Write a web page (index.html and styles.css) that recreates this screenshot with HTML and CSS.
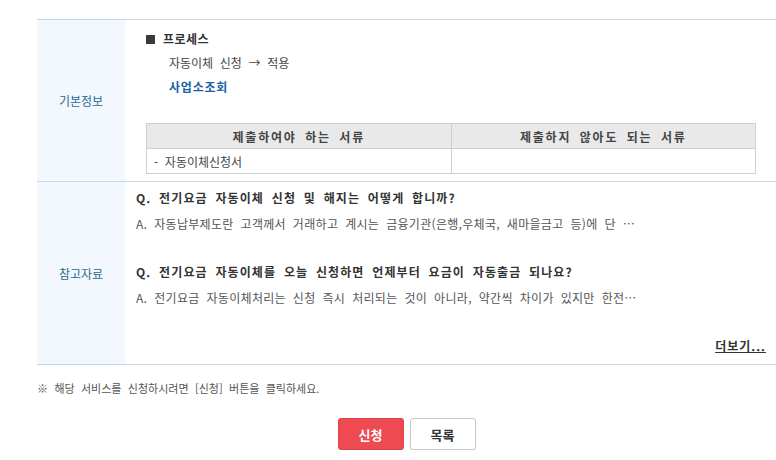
FILE: index.html
```html
<!DOCTYPE html>
<html lang="ko">
<head>
<meta charset="utf-8">
<link rel="stylesheet" href="styles.css">
</head>
<body>
<div class="wrap">
  <div class="info">
    <div class="row row-basic">
      <div class="label">기본정보</div>
      <div class="cell cell-basic">
        <p class="process-title"><span class="sq"></span>프로세스</p>
        <p class="process-step">자동이체 신청 → 적용</p>
        <p class="process-link"><a href="#">사업소조회</a></p>
        <table class="docs">
          <thead>
            <tr><th>제출하여야 하는 서류</th><th>제출하지 않아도 되는 서류</th></tr>
          </thead>
          <tbody>
            <tr><td>- 자동이체신청서</td><td></td></tr>
          </tbody>
        </table>
      </div>
    </div>
    <div class="row row-ref">
      <div class="label">참고자료</div>
      <div class="cell cell-ref">
        <div class="qa">
          <p class="q">Q. 전기요금 자동이체 신청 및 해지는 어떻게 합니까?</p>
          <p class="a">A. 자동납부제도란 고객께서 거래하고 계시는 금융기관(은행,우체국, 새마을금고 등)에 단 …</p>
        </div>
        <div class="qa">
          <p class="q">Q. 전기요금 자동이체를 오늘 신청하면 언제부터 요금이 자동출금 되나요?</p>
          <p class="a">A. 전기요금 자동이체처리는 신청 즉시 처리되는 것이 아니라, 약간씩 차이가 있지만 한전…</p>
        </div>
        <p class="more"><a href="#">더보기...</a></p>
      </div>
    </div>
  </div>
  <p class="notice">※ 해당 서비스를 신청하시려면 [신청] 버튼을 클릭하세요.</p>
  <div class="buttons">
    <button class="btn btn-apply" type="button">신청</button>
    <button class="btn btn-list" type="button">목록</button>
  </div>
</div>
</body>
</html>
```

FILE: styles.css
```css
* { box-sizing: border-box; }
html, body { margin: 0; padding: 0; background: #fff; }
body {
  font-family: "Noto Sans CJK KR", "Noto Sans", sans-serif;
  font-size: 12px;
  color: #444;
  word-spacing: 3.3px;
}
p { margin: 0; }
a { text-decoration: none; }

.wrap {
  margin-left: 37px;
  width: 739px;
  padding-top: 19px;
}

.info {
  border-top: 1px solid #c8d8e5;
  border-bottom: 1px solid #c8d8e5;
}
.row {
  display: flex;
}
.row + .row { border-top: 1px solid #c8d8e5; }
.label {
  width: 88px;
  flex: none;
  background: #f2f8fe;
  color: #2a6a90;
  font-size: 12px;
  display: flex;
  align-items: center;
  justify-content: center;
}
.cell { flex: 1; }

.cell-basic { padding: 7px 20px 7px 21px; }
.process-title, .process-step, .process-link { line-height: 24px; }
.process-title { font-weight: 700; color: #333; display: flex; align-items: center; letter-spacing: 0.5px; }
.sq { width: 9px; height: 9px; background: #3a3a3a; margin-right: 8px; display: inline-block; }
.process-step { padding-left: 23px; color: #444; }
.process-link { padding-left: 23px; }
.process-link a { color: #1b62a5; font-weight: 700; letter-spacing: 0.8px; }

.docs {
  margin-top: 24px;
  width: 100%;
  border-collapse: collapse;
  table-layout: fixed;
}
.docs th, .docs td {
  border: 1px solid #cfcfcf;
  height: 25px;
  padding: 0 8px;
  font-size: 12px;
}
.docs th {
  background: #e9e9e9;
  font-weight: 700;
  color: #444;
  text-align: center;
  letter-spacing: 1.8px;
}
.docs td { color: #444; text-align: left; padding-left: 7px; }

.cell-ref { padding: 3px 10px 5px 11px; }
.qa { margin-bottom: 22px; }
.q, .a { line-height: 26px; }
.q { font-weight: 700; color: #333; letter-spacing: 1.1px; }
.a { color: #555; letter-spacing: 0.3px; }
.more { text-align: right; line-height: 26px; }
.more a { color: #333; font-weight: 700; text-decoration: underline; letter-spacing: 1px; }

.notice {
  margin-top: 15px;
  font-size: 11px;
  line-height: 16px;
  color: #555;
}

.buttons {
  display: flex;
  justify-content: center;
  gap: 6px;
  margin-top: 22px;
  word-spacing: 0;
}
.btn {
  width: 66px;
  height: 32px;
  font-family: inherit;
  font-size: 13px;
  font-weight: 700;
  border-radius: 3px;
  cursor: pointer;
}
.btn-apply {
  background: #ed4a52;
  border: 1px solid #e0414a;
  color: #fff;
}
.btn-list {
  background: #fff;
  border: 1px solid #c8c8c8;
  color: #333;
  box-shadow: 0 1px 1px rgba(0,0,0,0.1);
}
```
